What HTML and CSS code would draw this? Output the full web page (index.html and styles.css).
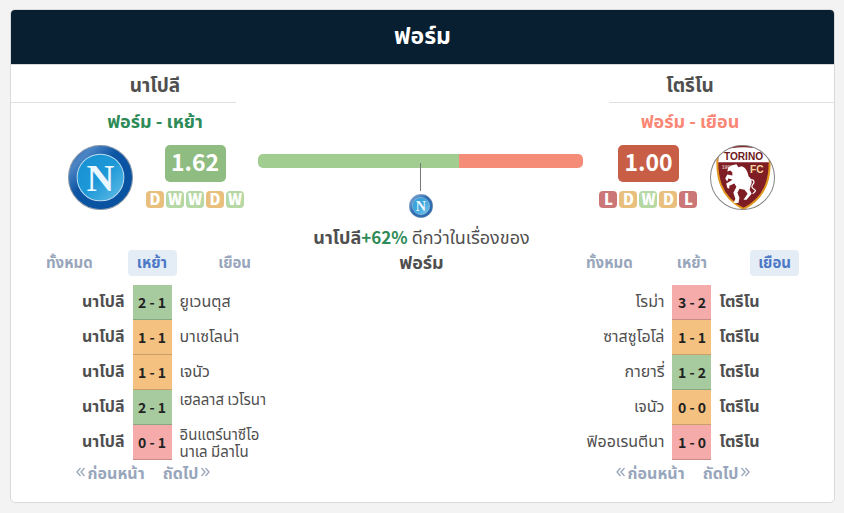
FILE: index.html
```html
<!DOCTYPE html>
<html lang="th">
<head>
<meta charset="utf-8">
<title>ฟอร์ม</title>
<link rel="stylesheet" href="styles.css">
</head>
<body>
<svg class="defs" aria-hidden="true">
  <defs>
    <linearGradient id="ring" x1="0" y1="0" x2="1" y2="1">
      <stop offset="0" stop-color="#1b5cab"/><stop offset=".2" stop-color="#4c85c4"/><stop offset=".42" stop-color="#0c55a4"/><stop offset="1" stop-color="#07519f"/>
    </linearGradient>
    <linearGradient id="disc" x1="0" y1="0" x2="1" y2="1">
      <stop offset="0" stop-color="#1690d2"/><stop offset=".5" stop-color="#1d98d7"/><stop offset="1" stop-color="#67bfe8"/>
    </linearGradient>
    <symbol id="napoli" viewBox="0 0 64 64">
      <circle cx="32" cy="32" r="31.5" fill="url(#ring)" stroke="#8794a5"/>
      <circle cx="32" cy="32" r="23" fill="url(#disc)" stroke="#b9dcf1"/>
      <text class="crest-n" x="32" y="45" text-anchor="middle">N</text>
    </symbol>
    <symbol id="chevrons" viewBox="0 0 9 10">
      <path d="M4.500 1 1 5l3.500 4M8.500 1 5 5l3.500 4" fill="none" stroke="currentColor" stroke-width="1.300"/>
    </symbol>
    <clipPath id="round"><circle cx="32" cy="32" r="31.5"/></clipPath>
  </defs>
</svg>
<section class="card">
  <h2 class="card-title">ฟอร์ม</h2>
  <div class="compare">
    <header class="team home">
      <h3 class="team-name">นาโปลี</h3>
      <h4 class="form-label">ฟอร์ม - เหย้า</h4>
      <div class="summary">
        <svg class="crest" role="img" aria-label="นาโปลี"><use href="#napoli"/></svg>
        <div class="record">
          <span class="ppg">1.62</span>
          <div class="runs"><span class="draw">D</span><span class="win">W</span><span class="win">W</span><span class="draw">D</span><span class="win">W</span></div>
        </div>
      </div>
    </header>

    <div class="versus">
      <div class="bar"><span class="bar-home"></span><span class="bar-away"></span></div>
      <div class="pointer"></div>
      <svg class="mini-crest" aria-hidden="true"><use href="#napoli"/></svg>
      <p class="verdict"><b>นาโปลี</b><b class="gain">+62%</b> ดีกว่าในเรื่องของ<br><b>ฟอร์ม</b></p>
    </div>

    <header class="team away">
      <h3 class="team-name">โตรีโน</h3>
      <h4 class="form-label">ฟอร์ม - เยือน</h4>
      <div class="summary">
        <div class="record">
          <span class="ppg">1.00</span>
          <div class="runs"><span class="loss">L</span><span class="draw">D</span><span class="win">W</span><span class="draw">D</span><span class="loss">L</span></div>
        </div>
        <svg class="crest" viewBox="0 0 64 64" role="img" aria-label="โตรีโน">
          <circle cx="32" cy="32" r="31.500" fill="#fff"/>
          <g clip-path="url(#round)">
            <path d="M8 4C23-1 43-1 58 4c3 27-2 47-25 59C10 51 5 31 8 4z" fill="#7f1d25" stroke="#e0951f" stroke-width="2"/>
            <path d="M9 6C23 1 43 1 57 6l1 11H8z" fill="#fff"/>
            <path d="M8 4C23-1 43-1 58 4" fill="none" stroke="#7f1d25" stroke-width="3"/>
          </g>
          <circle cx="32" cy="32" r="31.500" fill="none" stroke="#858585"/>
          <text class="crest-name" x="33" y="15" text-anchor="middle">TORINO</text>
          <text class="crest-year" x="17" y="24" text-anchor="middle">1906</text>
          <text class="crest-fc" x="46" y="28" text-anchor="middle">FC</text>
          <path fill="#fff" d="M26 19l2 3 3-1c4 1 6 5 7 10 3 2 4 6 2 9l-1 4 2 4-5 6h-3l4-6-3-4-5-1-2 4 2 5-1 5h-5l2-4-2-6 3-6-2-3-5 2v3l-2-1-1-4 5-3 1-1-4-1-1 3-2-3 2-4 5 1v-3l-2-2-3 1 1-4 4-2z"/>
          <path d="M40 34c4 0 4 3 2 5s0 4 2 5-1 3-2 4" fill="none" stroke="#fff" stroke-width="1.200"/>
        </svg>
      </div>
    </header>

    <section class="results home-results">
      <div class="tabs"><button type="button">ทั้งหมด</button><button type="button" class="active">เหย้า</button><button type="button">เยือน</button></div>
      <table>
        <tr><td class="own">นาโปลี</td><td class="score win">2 - 1</td><td>ยูเวนตุส</td></tr>
        <tr><td class="own">นาโปลี</td><td class="score draw">1 - 1</td><td>บาเซโลน่า</td></tr>
        <tr><td class="own">นาโปลี</td><td class="score draw">1 - 1</td><td>เจนัว</td></tr>
        <tr><td class="own">นาโปลี</td><td class="score win">2 - 1</td><td class="long">เฮลลาส เวโรนา</td></tr>
        <tr><td class="own">นาโปลี</td><td class="score loss">0 - 1</td><td class="long">อินแตร์นาซีโอ<br>นาเล มีลาโน</td></tr>
      </table>
      <nav class="pager"><a href="#prev"><svg class="chev"><use href="#chevrons"/></svg>ก่อนหน้า</a><a href="#next">ถัดไป<svg class="chev next"><use href="#chevrons"/></svg></a></nav>
    </section>

    <section class="results away-results">
      <div class="tabs"><button type="button">ทั้งหมด</button><button type="button">เหย้า</button><button type="button" class="active">เยือน</button></div>
      <table>
        <tr><td>โรม่า</td><td class="score loss">3 - 2</td><td class="own">โตรีโน</td></tr>
        <tr><td>ซาสซูโอโล่</td><td class="score draw">1 - 1</td><td class="own">โตรีโน</td></tr>
        <tr><td>กายารี่</td><td class="score win">1 - 2</td><td class="own">โตรีโน</td></tr>
        <tr><td>เจนัว</td><td class="score draw">0 - 0</td><td class="own">โตรีโน</td></tr>
        <tr><td>ฟิออเรนตีนา</td><td class="score loss">1 - 0</td><td class="own">โตรีโน</td></tr>
      </table>
      <nav class="pager"><a href="#prev"><svg class="chev"><use href="#chevrons"/></svg>ก่อนหน้า</a><a href="#next">ถัดไป<svg class="chev next"><use href="#chevrons"/></svg></a></nav>
    </section>
  </div>
</section>
</body>
</html>
```
FILE: styles.css
```css
* { box-sizing: border-box; }
body {
  margin: 0;
  padding: 9px 9px 10px 10px;
  background: #f3f3f3;
  color: #4f4f4f;
  font-family: "Noto Sans CJK SC", "Noto Sans Thai", "Open Sans", sans-serif;
  font-size: 16px;
}
h2, h3, h4, p { margin: 0; }
.defs { position: absolute; width: 0; height: 0; }
.card {
  background: #fff;
  border: 1px solid #d9dada;
  border-radius: 5px;
  overflow: hidden;
}
.card-title {
  padding-bottom: 6px;
  background: #081e31;
  border-bottom: 1px solid #d5d9dc;
  color: #fff;
  font-size: 23px;
  line-height: 48px;
  text-align: center;
}
.compare {
  display: grid;
  grid-template-columns: 30% 5% 1fr 5% 30%;
  grid-template-rows: auto auto;
  padding-bottom: 18px;
}
.team { grid-row: 1; }
.home { grid-column: 1 / 3; }
.away { grid-column: 4 / 6; }
.team-name {
  font-size: 19px;
  line-height: 37px;
  text-align: center;
}
.team-name::after {
  content: "";
  display: block;
  width: 78%;
  height: 1px;
  background: #dfe1e1;
}
.away .team-name::after { margin-left: auto; }
.form-label {
  padding-bottom: 4px;
  font-size: 18px;
  line-height: 34px;
  text-align: center;
}
.home .form-label { color: #2e8b57; }
.away .form-label { color: #fa8775; }
.summary {
  display: flex;
  justify-content: center;
  gap: 13px;
  padding: 4px 0 40px;
}
.home .summary { padding-left: 2px; }
.away .summary { padding-right: 5px; }
.crest { width: 65px; height: 65px; }
.crest-n { font: bold 38px "Liberation Serif", serif; fill: #eaf7ff; }
.crest-name, .crest-fc, .crest-year { font-family: "Liberation Sans", sans-serif; font-weight: bold; }
.crest-name { font-size: 10px; fill: #6d1820; }
.crest-fc { font-size: 10px; fill: #f7d9a0; }
.crest-year { font-size: 5px; fill: #dcb8ae; }
.record { display: flex; flex-direction: column; align-items: center; gap: 9px; }
.ppg {
  width: 61px;
  padding-bottom: 4px;
  border-radius: 5px;
  background: #8fbc80;
  color: #fff;
  font-size: 23px;
  font-weight: bold;
  line-height: 33px;
  text-align: center;
}
.away .ppg { background: #c85e46; }
.runs { display: flex; gap: 2px; }
.runs span {
  width: 18px;
  padding-bottom: 2px;
  border-radius: 4px;
  color: #fff;
  font-size: 15px;
  font-weight: 900;
  line-height: 15px;
  text-align: center;
}
.runs .win { background: #b5d8a5; }
.runs .draw { background: #e9bf7e; }
.runs .loss { background: #cc7777; }
.versus {
  grid-column: 2 / 5;
  grid-row: 1 / 3;
  display: flex;
  flex-direction: column;
  align-items: center;
  padding: 89px 4px 0 0;
}
.bar {
  display: flex;
  width: 326px;
  max-width: 100%;
  height: 14px;
  border-radius: 5px;
  overflow: hidden;
}
.bar-home { flex: 1.62; background: #a2cd91; }
.bar-away { flex: 1; background: #f58c78; }
.pointer { width: 1px; height: 28px; margin-top: -5px; background: #777; }
.mini-crest { width: 24px; height: 24px; margin-top: 3px; opacity: .85; }
.verdict { margin-top: 6px; padding-left: 2px; font-size: 18px; line-height: 24px; text-align: center; }
.gain { color: #2e8b57; font-size: 17px; }
.results { grid-row: 2; position: relative; }
.home-results { grid-column: 1 / 3; padding: 0 23px 0 17px; }
.away-results { grid-column: 4 / 6; padding: 0 18px 0 22px; }
.tabs { display: grid; grid-template-columns: repeat(3, 1fr); justify-items: center; }
button {
  min-width: 49px;
  height: 26px;
  padding: 0 8px 2px;
  border: 0;
  border-radius: 4px;
  background: none;
  color: #98a6bc;
  font: bold 15px/24px "Noto Sans CJK SC", "Noto Sans Thai", "Open Sans", sans-serif;
}
button.active { background: #e4ecf6; color: #4c78c6; }
table { width: 100%; margin-top: 9px; border-collapse: separate; border-spacing: 0; table-layout: fixed; }
td { height: 35px; padding: 0 8px 4px; line-height: 17px; white-space: nowrap; }
td:first-child { text-align: right; }
.own { font-weight: bold; }
.score {
  width: 39px;
  padding: 0;
  border-bottom: 1px solid rgba(0, 0, 0, .18);
  color: #222;
  font-size: 14px;
  font-weight: bold;
  text-align: center;
}
.score.win { background: #a7cb9f; }
.score.draw { background: #f5c180; }
.score.loss { background: #f5abaa; }
td.long { padding-bottom: 0; font-size: 15px; vertical-align: top; }
.pager { display: flex; justify-content: center; gap: 18px; padding-right: 18px; }
.pager a {
  display: flex;
  align-items: center;
  gap: 3px;
  color: #98a6bc;
  font-size: 16px;
  font-weight: bold;
  line-height: 24px;
  text-decoration: none;
}
.chev { width: 9px; height: 10px; }
.next { transform: scaleX(-1); }
```
